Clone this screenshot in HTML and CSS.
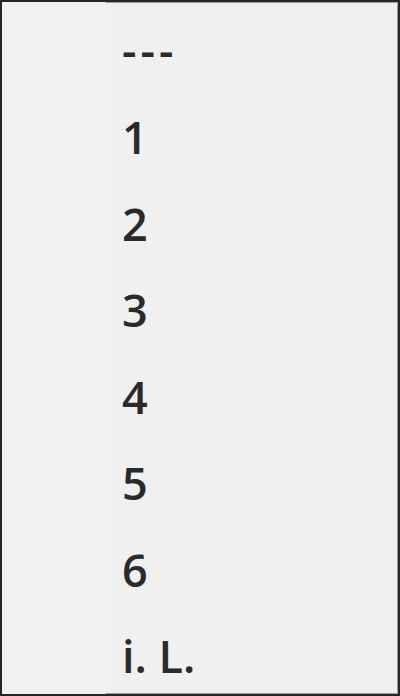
FILE: index.html
```html
<!DOCTYPE html>
<html lang="de">
<head>
    <meta charset="UTF-8">
    <meta name="viewport" content="width=device-width, initial-scale=1.0">
    <title>Auswahl</title>
    <link rel="stylesheet" href="styles.css">
</head>
<body>
    <div class="dropdown">
        <div class="gutter"></div>
        <ul class="options">
            <li class="option option-empty">---</li>
            <li class="option">1</li>
            <li class="option">2</li>
            <li class="option">3</li>
            <li class="option">4</li>
            <li class="option">5</li>
            <li class="option">6</li>
            <li class="option">i. L.</li>
        </ul>
    </div>
</body>
</html>
```

FILE: styles.css
```css
* {
    margin: 0;
    padding: 0;
    box-sizing: border-box;
}

body {
    font-family: 'Open Sans', 'DejaVu Sans', sans-serif;
    background: #f0f0f0;
}

.dropdown {
    width: 400px;
    height: 696px;
    display: flex;
    background: #f0f0f0;
    border: 2px solid #262626;
    box-shadow: inset 0 0 0 1px #9a9a9a;
}

.gutter {
    width: 104px;
    flex-shrink: 0;
    background: #f1f1f1;
    border-right: 1px solid #f4f4f4;
}

.options {
    list-style: none;
    flex: 1;
    padding: 5px 0 0 16px;
}

.option {
    height: 86.5px;
    display: flex;
    align-items: center;
    font-size: 45px;
    font-weight: 600;
    color: #2a2a2a;
}

/* leerer Eintrag: Bindestriche etwas auseinander */
.option-empty {
    letter-spacing: 4px;
    padding-bottom: 2px;
}
```
